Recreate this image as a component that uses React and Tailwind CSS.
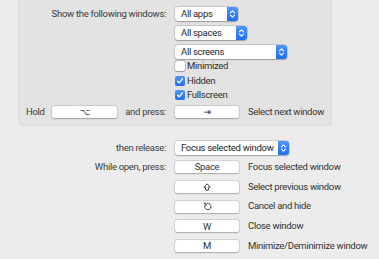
import React from 'react';

const Arrows = () => (
  <svg width="7" height="10" viewBox="0 0 7 10" fill="none" stroke="white" strokeWidth="1.1" strokeLinecap="round" strokeLinejoin="round">
    <path d="M1.5 3.8 L3.5 1.8 L5.5 3.8" />
    <path d="M1.5 6.2 L3.5 8.2 L5.5 6.2" />
  </svg>
);

const Popup = ({ label, width }) => (
  <div
    className="h-[14px] bg-white rounded-[3px] flex items-center shadow-[0_0_0_0.5px_rgba(0,0,0,0.18),0_0.5px_1.5px_rgba(0,0,0,0.25)]"
    style={{ width }}
  >
    <span className="pl-[6px] text-[#262626] leading-none">{label}</span>
    <div className="ml-auto w-[11px] h-[14px] bg-gradient-to-b from-[#4f95fb] to-[#1f6ff2] rounded-r-[3px] flex items-center justify-center">
      <Arrows />
    </div>
  </div>
);

const Key = ({ children, width = 64 }) => (
  <div
    className="h-[12px] bg-white rounded-[2px] flex items-center justify-center text-[#333] leading-none shadow-[0_0_0_0.5px_rgba(0,0,0,0.16),0_0.5px_1.5px_rgba(0,0,0,0.22)]"
    style={{ width }}
  >
    {children}
  </div>
);

const Check = ({ checked, label }) => (
  <div className="flex items-center h-[14.5px]">
    {checked ? (
      <div className="w-[10px] h-[10px] rounded-[2px] bg-gradient-to-b from-[#4f95fb] to-[#1f6ff2] flex items-center justify-center">
        <svg width="8" height="8" viewBox="0 0 8 8" fill="none" stroke="white" strokeWidth="1.3" strokeLinecap="round" strokeLinejoin="round">
          <path d="M1.6 4.2 L3.2 5.8 L6.4 1.8" />
        </svg>
      </div>
    ) : (
      <div className="w-[10px] h-[10px] rounded-[2px] bg-white shadow-[0_0_0_0.5px_rgba(0,0,0,0.3),0_0.5px_1px_rgba(0,0,0,0.2)]" />
    )}
    <span className="ml-[2px] text-[#2e2e2e]">{label}</span>
  </div>
);

const Label = ({ children }) => (
  <div className="w-[148px] shrink-0 text-right text-[#3c3c3c]">{children}</div>
);

const CancelIcon = () => (
  <svg width="9" height="9" viewBox="0 0 9 9" fill="none" stroke="#333" strokeWidth="0.9" strokeLinecap="round" strokeLinejoin="round">
    <path d="M2.2 2.6 A3.2 3.2 0 1 0 4.5 1.3" />
    <path d="M1.3 1.3 L2.9 1.3 L2.9 2.9" />
    <path d="M1.3 1.3 L3.2 3.2" />
  </svg>
);

const ShiftIcon = () => (
  <svg width="8" height="8" viewBox="0 0 8 8" fill="none" stroke="#333" strokeWidth="0.9" strokeLinejoin="round">
    <path d="M4 0.8 L7.2 4.2 L5.4 4.2 L5.4 7.2 L2.6 7.2 L2.6 4.2 L0.8 4.2 Z" />
  </svg>
);

const App = () => {
  return (
    <div className="w-[379px] h-[259px] bg-[#ececec] overflow-hidden whitespace-nowrap text-[9.5px] tracking-[-0.3px] font-['Roboto',Arial,sans-serif]">
      {/* upper group box */}
      <div className="ml-[18px] w-[314px] h-[126px] bg-[#e3e3e3] border border-t-0 border-[#dcdcdc] rounded-b-[4px] pt-[7px]">
        <div className="flex items-center h-[14px]">
          <div className="w-[147px] shrink-0 text-right text-[#3c3c3c]">Show the following windows:</div>
          <div className="ml-[9px]"><Popup label="All apps" width={63} /></div>
        </div>
        <div className="flex items-center h-[14px] mt-[5px] pl-[156px]">
          <Popup label="All spaces" width={72} />
        </div>
        <div className="flex items-center h-[14px] mt-[5px] pl-[156px]">
          <Popup label="All screens" width={112} />
        </div>
        <div className="pl-[156px]">
          <Check label="Minimized" />
          <Check checked label="Hidden" />
          <Check checked label="Fullscreen" />
        </div>
        <div className="flex items-center h-[14px] mt-[2.5px] pl-[7px]">
          <span className="w-[26px] text-[#3c3c3c]">Hold</span>
          <Key width={65}>
            <span className="font-['DejaVu_Sans'] text-[9px]">⌥</span>
          </Key>
          <span className="w-[49px] text-right text-[#3c3c3c]">and press:</span>
          <div className="ml-[9px]">
            <Key width={64}>
              <span className="font-['DejaVu_Sans'] text-[9px]">⇥</span>
            </Key>
          </div>
          <span className="ml-[9px] text-[#333]">Select next window</span>
        </div>
      </div>

      {/* lower section */}
      <div className="mt-[15px] ml-[18px]">
        <div className="flex items-center h-[14px]">
          <Label>then release:</Label>
          <div className="ml-[9px]"><Popup label="Focus selected window" width={114} /></div>
        </div>
        <div className="mt-[6px] flex flex-col gap-[7.75px]">
          {[
            ['While open, press:', <span>Space</span>, 'Focus selected window'],
            ['', <ShiftIcon />, 'Select previous window'],
            ['', <CancelIcon />, 'Cancel and hide'],
            ['', <span>W</span>, 'Close window'],
            ['', <span>M</span>, 'Minimize/Deminimize window'],
          ].map(([label, key, action], i) => (
            <div key={i} className="flex items-center h-[12px]">
              <Label>{label}</Label>
              <div className="ml-[9px]"><Key>{key}</Key></div>
              <span className="ml-[9px] text-[#333]">{action}</span>
            </div>
          ))}
        </div>
      </div>
    </div>
  );
};

export default App;
